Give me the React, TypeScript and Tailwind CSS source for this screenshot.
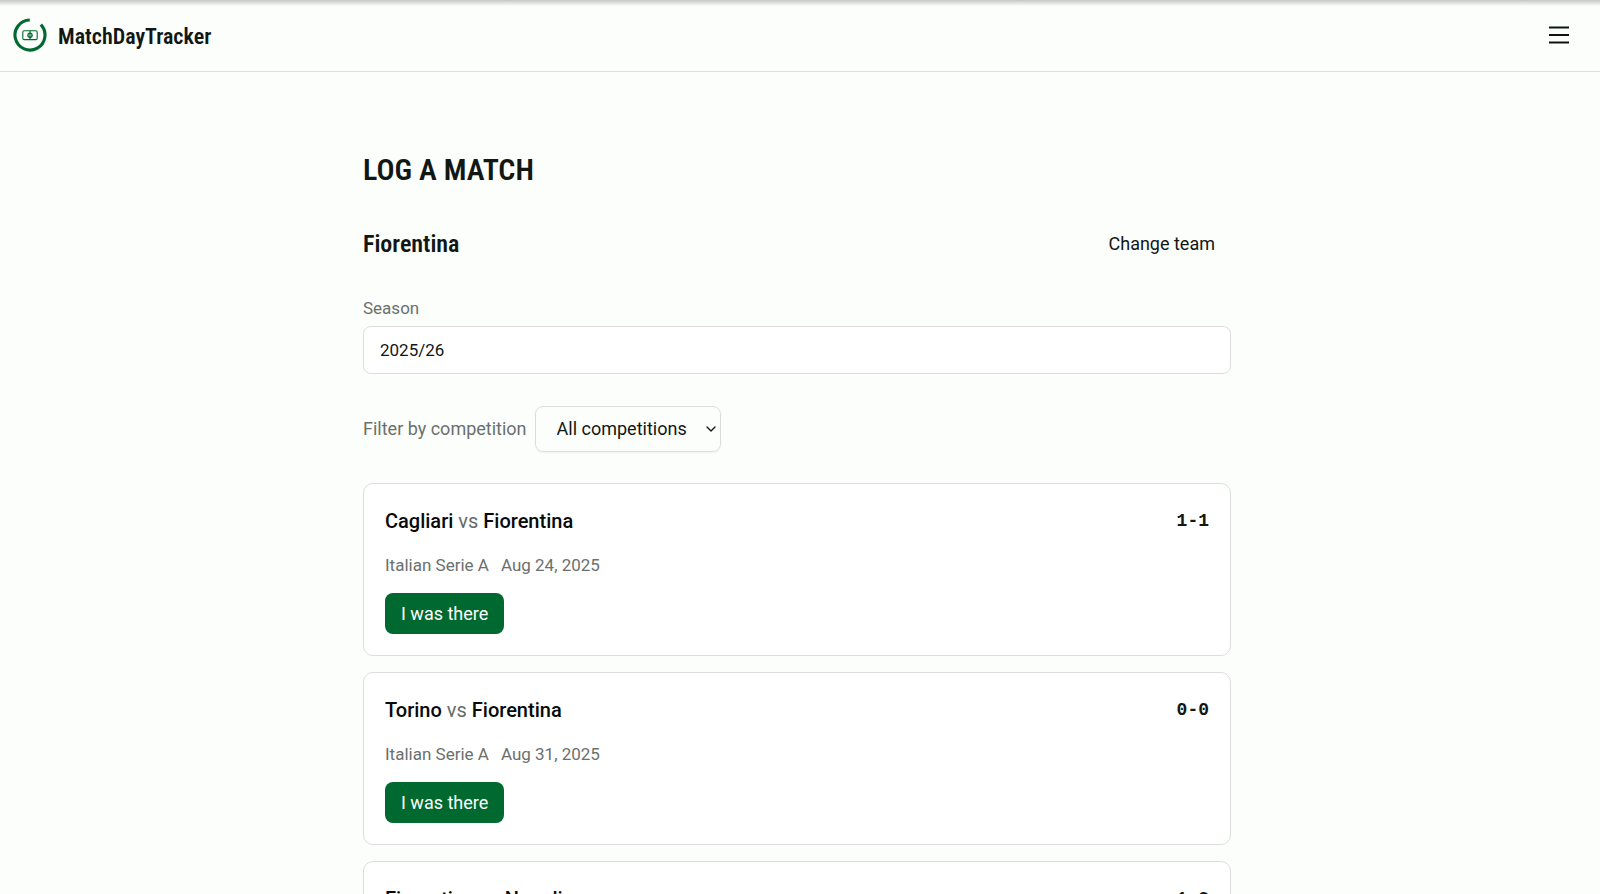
import React, { useState } from "react";
import { ChevronDown } from "lucide-react";

interface Match {
  home: string;
  away: string;
  score: string;
  competition: string;
  date: string;
}

const matches: Match[] = [
  {
    home: "Cagliari",
    away: "Fiorentina",
    score: "1-1",
    competition: "Italian Serie A",
    date: "Aug 24, 2025",
  },
  {
    home: "Torino",
    away: "Fiorentina",
    score: "0-0",
    competition: "Italian Serie A",
    date: "Aug 31, 2025",
  },
  {
    home: "Fiorentina",
    away: "Napoli",
    score: "1-3",
    competition: "Italian Serie A",
    date: "Sep 13, 2025",
  },
];

const Logo: React.FC = () => (
  <svg
    viewBox="0 0 34 34"
    fill="none"
    stroke="#00692f"
    className="w-[34px] h-[34px]"
    aria-hidden="true"
  >
    {/* Open ring */}
    <path d="M16.8 2A15 15 0 1 0 27.8 6.6" strokeWidth="3.1" />
    {/* Pitch */}
    <rect x="9.8" y="12.8" width="14.4" height="8.8" rx="1.4" strokeWidth="1.1" />
    <circle cx="17" cy="17.2" r="2.1" strokeWidth="1.3" />
    <path d="M17 12.8v8.8" strokeWidth="1.2" />
  </svg>
);

const Header: React.FC = () => (
  <header className="border-b border-[#dcdfdc]">
    <div className="h-1.5 bg-gradient-to-b from-[#c6c8c6] to-[#fbfefb]" />
    <div className="flex items-center justify-between h-[65px] pl-[13px] pr-[31px] pb-2">
      <a href="#" className="flex items-center gap-[11px]">
        <Logo />
        <span className="pt-1 font-['Roboto_Condensed',Roboto,sans-serif] text-[22px] leading-7 font-semibold">
          MatchDayTracker
        </span>
      </a>
      <button type="button" aria-label="Open menu">
        <svg
          viewBox="0 0 20 20"
          stroke="#0d1410"
          strokeWidth="2"
          className="w-5 h-5"
          aria-hidden="true"
        >
          <path d="M0 2.5h20M0 10h20M0 17.5h20" />
        </svg>
      </button>
    </div>
  </header>
);

const MatchCard: React.FC<{ match: Match }> = ({ match }) => (
  <li className="bg-white border border-[#dcdedc] rounded-[10px] p-[21px]">
    <div className="flex items-center justify-between">
      <h3 className="text-xl leading-8 font-medium text-[#070a08]">
        {match.home} <span className="font-normal text-[#666b68]">vs</span>{" "}
        {match.away}
      </h3>
      <span className="font-['Liberation_Mono',monospace] text-lg leading-8 font-bold">
        {match.score}
      </span>
    </div>
    <div className="flex gap-3 mt-4 text-[17px] leading-6 text-[#6b706d]">
      <span>{match.competition}</span>
      <span>{match.date}</span>
    </div>
    <button
      type="button"
      className="mt-4 h-[41px] px-4 rounded-lg bg-[#00692f] hover:bg-[#005a28] text-white"
    >
      I was there
    </button>
  </li>
);

const App: React.FC = () => {
  const [season, setSeason] = useState("2025/26");

  return (
    <div className="min-h-screen bg-[#fbfefb] text-[#121714] font-[Roboto,sans-serif] text-lg">
      <Header />

      <main className="pr-1.5">
        <div className="max-w-[868px] mx-auto pt-[74px] pb-16">
          <h1 className="font-['Roboto_Condensed',Roboto,sans-serif] text-[30px] leading-12 font-semibold">
            LOG A MATCH
          </h1>

          {/* Selected team */}
          <div className="flex items-center justify-between mt-[26px] h-12">
            <h2 className="font-['Roboto_Condensed',Roboto,sans-serif] text-2xl font-semibold">
              Fiorentina
            </h2>
            <button type="button" className="px-4">
              Change team
            </button>
          </div>

          {/* Season */}
          <label htmlFor="season" className="block mt-[26px] text-[17px] leading-7 text-[#6b706d]">
            Season
          </label>
          <input
            id="season"
            type="text"
            value={season}
            onChange={(e) => setSeason(e.target.value)}
            className="block w-full h-12 mt-1 px-4 bg-white border border-[#dcdedc] rounded-lg text-[17px]"
          />

          {/* Competition filter */}
          <div className="flex items-center gap-2 mt-8">
            <label htmlFor="competition" className="text-[#6b706d]">
              Filter by competition
            </label>
            <div className="relative">
              <select
                id="competition"
                className="appearance-none h-[46px] pl-[21px] pr-8 border border-[#dcdedc] rounded-lg shadow-xs"
              >
                <option>All competitions</option>
                <option>Italian Serie A</option>
              </select>
              <ChevronDown className="absolute right-0.5 top-1/2 -translate-y-1/2 w-4 h-4 pointer-events-none" />
            </div>
          </div>

          <ul className="flex flex-col gap-4 mt-[31px]">
            {matches.map((match) => (
              <MatchCard key={match.date} match={match} />
            ))}
          </ul>
        </div>
      </main>
    </div>
  );
};

export default App;
